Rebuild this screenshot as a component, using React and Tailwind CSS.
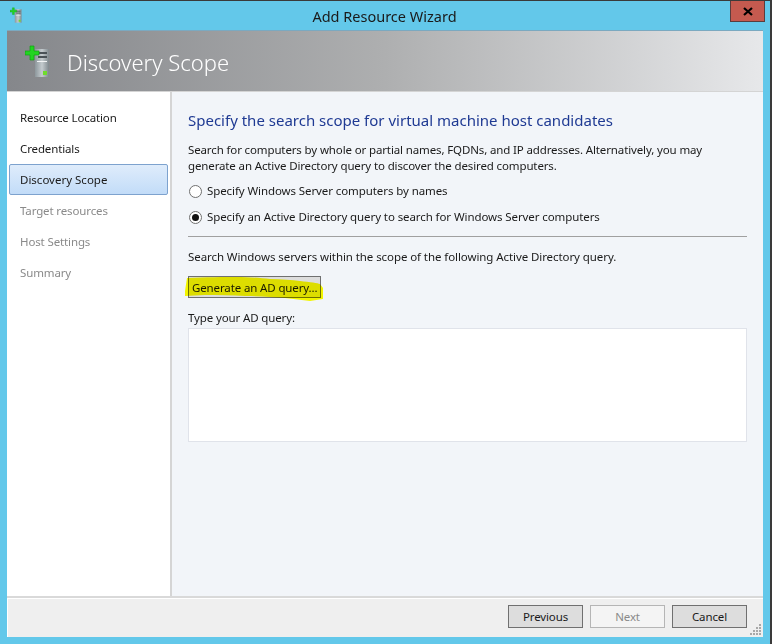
import React from 'react';

const ServerIcon = ({ className }) => (
  <svg className={className} viewBox="0 0 25 32">
    <defs>
      <linearGradient id="tower" x1="0" x2="1" y1="0" y2="0">
        <stop offset="0" stopColor="#8d979c" />
        <stop offset="0.5" stopColor="#c4cbce" />
        <stop offset="1" stopColor="#7f888d" />
      </linearGradient>
    </defs>
    <rect x="10" y="4" width="14" height="28" fill="url(#tower)" />
    <rect x="13" y="7" width="9" height="2" fill="#4a5257" />
    <rect x="13" y="11" width="9" height="2" fill="#4a5257" />
    <rect x="12" y="16" width="10" height="1" fill="#f2f4f5" />
    <rect x="18" y="26" width="4" height="4" fill="#6fdc2c" />
    <path d="M5 1h4v5h5v4H9v5H5v-5H0V6h5z" fill="#22d422" stroke="#12a012" strokeWidth="0.7" />
  </svg>
);

const steps = [
  { name: 'Resource Location', color: 'text-[#1a1a1a]' },
  { name: 'Credentials', color: 'text-[#1a1a1a]' },
  { name: 'Discovery Scope', color: 'text-[#1a1a1a]', active: true },
  { name: 'Target resources', color: 'text-[#8a8a8a]' },
  { name: 'Host Settings', color: 'text-[#8a8a8a]' },
  { name: 'Summary', color: 'text-[#8a8a8a]' },
];

const Radio = ({ checked, label }) => (
  <div className="flex items-center h-[26px]">
    <span className="w-[13px] h-[13px] rounded-full border border-[#707070] bg-white flex items-center justify-center ml-[1px]">
      {checked && <span className="w-[7px] h-[7px] rounded-full bg-[#111]" />}
    </span>
    <span className="ml-[5px] tracking-[-0.09px]">{label}</span>
  </div>
);

const WizardButton = ({ children, disabled }) => (
  <button
    className={
      disabled
        ? 'w-[75px] h-[23px] border border-[#b5b5b5] bg-[#f4f4f4] text-[#8a8a8a]'
        : 'w-[75px] h-[23px] border border-[#707070] bg-[#dddddd] text-[#1a1a1a]'
    }
  >
    {children}
  </button>
);

export default function App() {
  return (
    <div className="w-[772px] h-[644px] overflow-hidden bg-[#63c8ea] border-t border-r-2 border-[#3a3a3a] pl-[7px] flex flex-col font-['Noto_Sans',sans-serif] text-[11.5px] tracking-[-0.13px] text-[#1a1a1a]">
      {/* title bar */}
      <div className="h-[29px] shrink-0 flex items-start">
        <ServerIcon className="w-[12px] h-[16px] mt-[6px] ml-[3px]" />
        <div className="flex-1 text-center text-[14.5px] tracking-normal leading-[20px] mt-[5px] pl-[17px]">Add Resource Wizard</div>
        <div className="w-[35px] h-[21px] bg-[#c55a4f] border border-[#5a3d3d] border-t-0 flex items-center justify-center mr-[5px]">
          <svg width="10" height="9" viewBox="0 0 10 9">
            <path d="M1 1l8 7M9 1L1 8" stroke="#000" strokeWidth="2.2" />
          </svg>
        </div>
      </div>

      {/* window */}
      <div className="w-[756px] h-[607px] flex flex-col">
        <div className="h-[62px] shrink-0 flex items-center border-t border-b border-t-[#7ba9c0] border-b-[#d4d4d4] bg-gradient-to-r from-[#85878b] via-[#aeafb0] to-[#e7e8ea]">
          <ServerIcon className="w-[25px] h-[32px] ml-[18px]" />
          <span className="ml-[17px] pt-[2px] text-[22px] font-light tracking-normal text-white">Discovery Scope</span>
        </div>

        <div className="flex-1 flex min-h-0">
          <div className="w-[165px] shrink-0 bg-white border-r-2 border-[#d5d5d5] pt-[10px]">
            {steps.map((s) => (
              <div
                key={s.name}
                className={
                  s.active
                    ? `h-[31px] mx-[2px] pl-[10px] flex items-center rounded-[2px] border border-[#7da2ce] bg-gradient-to-b from-[#dfecfb] to-[#c2dcf8] tracking-normal ${s.color}`
                    : `h-[31px] pl-[13px] flex items-center ${s.color}`
                }
              >
                {s.name}
              </div>
            ))}
          </div>

          <div className="flex-1 bg-[#f2f5f9] pl-[16px] pr-[16px] pt-[16px]">
            <h1 className="text-[15px] tracking-normal leading-[24px] text-[#1f3a93]">Specify the search scope for virtual machine host candidates</h1>
            <p className="mt-[10px] leading-[16px]">
              Search for computers by whole or partial names, FQDNs, and IP addresses. Alternatively, you may<br />
              generate an Active Directory query to discover the desired computers.
            </p>
            <div className="mt-[4px]">
              <Radio label="Specify Windows Server computers by names" />
              <Radio checked label="Specify an Active Directory query to search for Windows Server computers" />
            </div>
            <div className="mt-[6px] border-t border-[#a0a0a0]" />
            <p className="mt-[12px] leading-[16px] tracking-[-0.08px]">Search Windows servers within the scope of the following Active Directory query.</p>
            <button className="relative block mt-[11px] w-[133px] h-[22px] border border-[#707070] bg-[#dddddd] text-left">
              <span className="relative pl-[3px] top-[1px]">Generate an AD query...</span>
              <svg className="absolute left-[-4px] top-[-1px] w-[139px] h-[26px] mix-blend-multiply" viewBox="0 0 139 26">
                <path d="M2 2C20 1 40 1 50 1c15 0 25 1 35 2 12 0 22 1 30 2 10 1 18 2 20 3l3 4v11l-13 2c-8-1-17-2-25-3-14-1-26-2-40-2-13-1-27-1-40-1l-20 1L0 15z" fill="#ffff00" />
              </svg>
            </button>
            <div className="mt-[12px] leading-[16px]">Type your AD query:</div>
            <div className="mt-[2px] h-[114px] bg-white border border-[#e0e3ea]" />
          </div>
        </div>

        <div className="relative h-[41px] shrink-0 border-t-2 border-[#d9d9d9] bg-[#efefef] shadow-[inset_1px_1px_0_#ffffff] flex items-start justify-end gap-[7px] pt-[7px] pr-[16px]">
          <WizardButton>Previous</WizardButton>
          <WizardButton disabled>Next</WizardButton>
          <WizardButton>Cancel</WizardButton>
          <svg className="absolute right-[1px] bottom-[1px]" width="12" height="12" viewBox="0 0 12 12" fill="#a8a8a8">
            <rect x="9" y="0" width="2" height="2" />
            <rect x="6" y="3" width="2" height="2" />
            <rect x="9" y="3" width="2" height="2" />
            <rect x="3" y="6" width="2" height="2" />
            <rect x="6" y="6" width="2" height="2" />
            <rect x="9" y="6" width="2" height="2" />
            <rect x="0" y="9" width="2" height="2" />
            <rect x="3" y="9" width="2" height="2" />
            <rect x="6" y="9" width="2" height="2" />
            <rect x="9" y="9" width="2" height="2" />
          </svg>
        </div>
      </div>
    </div>
  );
}
